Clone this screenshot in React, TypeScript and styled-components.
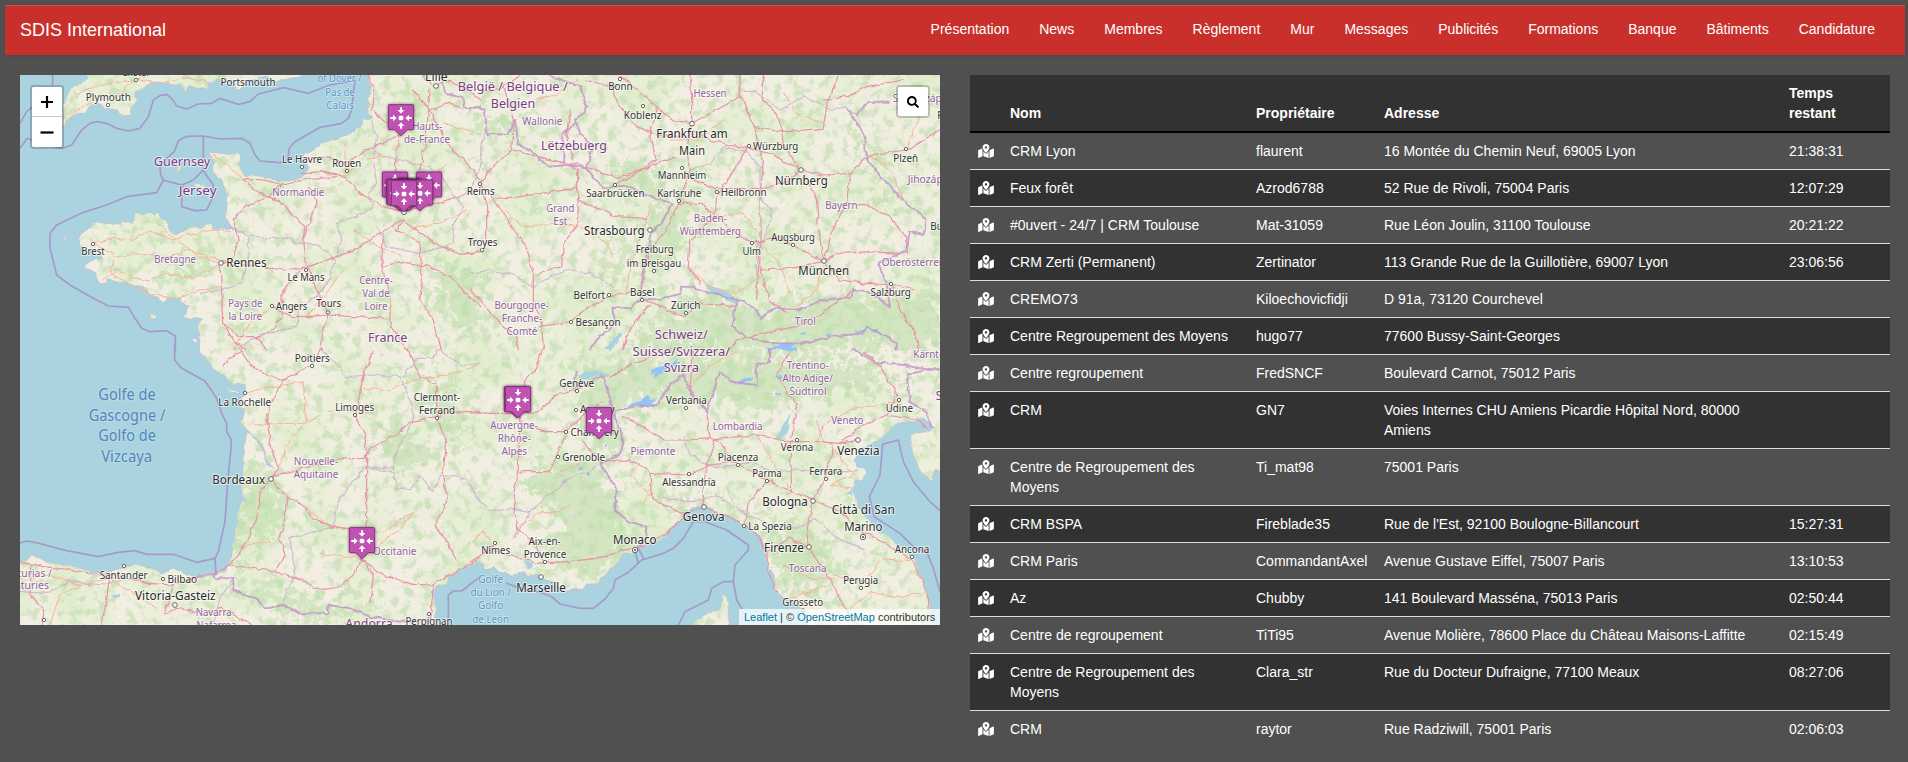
import React from 'react';
import styled, { createGlobalStyle } from 'styled-components';
import { FaMapMarkedAlt, FaSearch } from 'react-icons/fa';

const GlobalStyle = createGlobalStyle`
  *, *::before, *::after { box-sizing: border-box; }
  html, body { margin: 0; background: #505050; }
  body {
    font-family: "Liberation Sans", Arial, sans-serif;
    font-size: 14px;
    line-height: 20px;
    color: #fff;
  }
  a { text-decoration: none; }
`;

const Page = styled.div`
  height: 762px;
  padding: 5px 3px 0 5px;
  overflow: hidden;
`;

const Navbar = styled.nav`
  display: flex;
  align-items: center;
  justify-content: space-between;
  height: 50px;
  padding: 0 15px 3px;
  background: #c9302c;
  border-top: 1px solid #d44c48;
  box-shadow: 0 1px 5px rgba(0, 0, 0, 0.08);
`;

const Brand = styled.a`
  margin-top: 2px;
  color: #fff;
  font-size: 18px;
  line-height: 20px;
`;

const NavList = styled.ul`
  display: flex;
  margin: 0;
  padding: 0;
  list-style: none;
`;

const NavLink = styled.a`
  display: block;
  padding: 0 15px;
  line-height: 20px;
  color: #fff;
`;

const Content = styled.main`
  display: flex;
  gap: 30px;
  align-items: flex-start;
  padding: 20px 15px 0;
`;

const MapPanel = styled.section`
  position: relative;
  flex: none;
  width: 920px;
  height: 550px;
  overflow: hidden;
  background: #aad3df;
`;

const MapCanvas = styled.svg`
  display: block;
  width: 920px;
  height: 550px;
  font-family: "Noto Sans", "Open Sans", sans-serif;
`;

const ControlBox = styled.div<{ $side: 'left' | 'right' }>`
  position: absolute;
  top: 10px;
  ${(p) => p.$side}: 10px;
  border: 2px solid rgba(0, 0, 0, 0.2);
  border-radius: 4px;
  background-clip: padding-box;
  background-color: #fff;
`;

const ControlButton = styled.button`
  display: flex;
  align-items: center;
  justify-content: center;
  width: 30px;
  height: 29px;
  padding: 0;
  border: 0;
  border-radius: 2px;
  background: #fff;
  color: #000;
  & + & {
    height: 31px;
    border-top: 1px solid #ccc;
    border-radius: 0 0 2px 2px;
  }
`;

const Attribution = styled.div`
  position: absolute;
  right: 0;
  bottom: 0;
  height: 16px;
  width: 201px;
  padding: 0 5px;
  background: rgba(255, 255, 255, 0.7);
  color: #333;
  font-size: 11px;
  line-height: 16px;
  white-space: nowrap;
  a { color: #0078a8; }
`;

const Table = styled.table`
  flex: none;
  width: 920px;
  table-layout: fixed;
  border-collapse: collapse;
  border-spacing: 0;
`;

const HeadCell = styled.th`
  padding: 8px;
  border-bottom: 2px solid #000;
  background: #323232;
  text-align: left;
  vertical-align: bottom;
  font-weight: 700;
`;

const Row = styled.tr<{ $dark: boolean }>`
  background: ${(p) => (p.$dark ? '#323232' : 'transparent')};
`;

const Cell = styled.td`
  padding: 8px;
  vertical-align: top;
  tr:not(:first-child) > & { border-top: 1px solid #ddd; }
`;

const PinIcon = styled(FaMapMarkedAlt)`
  display: block;
  width: 16px;
  height: 14px;
  margin-top: 3px;
`;

const NAV = ['Présentation', 'News', 'Membres', 'Règlement', 'Mur', 'Messages', 'Publicités', 'Formations', 'Banque', 'Bâtiments', 'Candidature'];

const ROWS: [string, string, string, string][] = [
  ['CRM Lyon', 'flaurent', '16 Montée du Chemin Neuf, 69005 Lyon', '21:38:31'],
  ['Feux forêt', 'Azrod6788', '52 Rue de Rivoli, 75004 Paris', '12:07:29'],
  ['#0uvert - 24/7 | CRM Toulouse', 'Mat-31059', 'Rue Léon Joulin, 31100 Toulouse', '20:21:22'],
  ['CRM Zerti (Permanent)', 'Zertinator', '113 Grande Rue de la Guillotière, 69007 Lyon', '23:06:56'],
  ['CREMO73', 'Kiloechovicfidji', 'D 91a, 73120 Courchevel', ''],
  ['Centre Regroupement des Moyens', 'hugo77', '77600 Bussy-Saint-Georges', ''],
  ['Centre regroupement', 'FredSNCF', 'Boulevard Carnot, 75012 Paris', ''],
  ['CRM', 'GN7', 'Voies Internes CHU Amiens Picardie Hôpital Nord, 80000 Amiens', ''],
  ['Centre de Regroupement des Moyens', 'Ti_mat98', '75001 Paris', ''],
  ['CRM BSPA', 'Fireblade35', "Rue de l'Est, 92100 Boulogne-Billancourt", '15:27:31'],
  ['CRM Paris', 'CommandantAxel', 'Avenue Gustave Eiffel, 75007 Paris', '13:10:53'],
  ['Az', 'Chubby', '141 Boulevard Masséna, 75013 Paris', '02:50:44'],
  ['Centre de regroupement', 'TiTi95', 'Avenue Molière, 78600 Place du Château Maisons-Laffitte', '02:15:49'],
  ['Centre de Regroupement des Moyens', 'Clara_str', 'Rue du Docteur Dufraigne, 77100 Meaux', '08:27:06'],
  ['CRM', 'raytor', 'Rue Radziwill, 75001 Paris', '02:06:03'],
];

/* Map geometry is kept on four sheets; three map units make one pixel. */
type Sheet = 'nw' | 'ne' | 'sw' | 'se';
const ORIGIN: Record<Sheet, [number, number]> = {
  nw: [0, 180],
  ne: [1410, 180],
  sw: [0, 1035],
  se: [1410, 1035],
};

const pts = (sheet: Sheet, s: string) =>
  s.trim().split(/\s+/).map((p) => {
    const [x, y] = p.split(',').map(Number);
    return `${x + ORIGIN[sheet][0]},${y + ORIGIN[sheet][1]}`;
  }).join(' ');

const LAND = [
  [
    pts('nw', '1105,30 1107,62 1111,85 1102,120 1103,160 1118,172 1090,180 1083,200 1050,222 1010,236 965,250 945,265 915,282 917,305 927,325 915,345 897,358 865,363 835,362 808,355 760,345 735,350 722,328 718,308 722,295 712,278 690,285 660,279 625,278 640,302 642,340 665,360 673,380 680,400 678,440 675,475 690,490 700,505 670,506 640,508 635,490 620,492 600,510 585,502 570,505 545,515 525,525 510,510 505,490 480,470 476,455 458,466 445,458 430,465 405,462 400,490 370,485 345,493 335,487 318,492 290,485 275,500 260,510 240,525 238,558 262,575 300,575 308,595 275,605 250,620 285,635 295,655 300,672 320,668 325,655 345,665 380,665 395,680 420,680 450,700 490,728 510,712 540,713 545,728 570,735 548,770 570,778 610,775 595,795 600,830 598,870'),
    pts('sw', '600,15 625,50 645,75 680,95 700,120 735,115 738,145 725,160 722,185 735,200 722,235 745,258 775,285 790,305 795,340 820,370 800,358 787,315 765,280 742,260 735,290 730,360 725,430 728,460 718,490 712,540 704,575 695,635 685,665 665,685 640,690 600,697 560,690 545,680 520,672 505,680 480,685 470,675 430,665 410,658 385,662 360,675 320,682 270,680 240,670 190,660 140,652 95,632 80,645 50,650 50,860 1310,860 1305,780 1298,742 1312,725 1340,715 1350,690 1400,665 1440,650'),
    pts('se', '0,648 40,658 48,675 75,665 90,682 130,690 160,680 175,692 215,690 225,705 255,710 262,722 290,735 320,730 340,735 352,718 385,715 400,690 430,670 460,630 490,620 510,605 560,590 590,570 610,542 630,525 645,502 670,488 705,480 740,500 790,520 830,545 845,560 865,570 885,600 890,655 912,690 918,740 940,760 965,765 985,780 1000,810 1020,860 1390,860 1380,790 1360,710 1345,670 1330,640 1290,600 1230,560 1190,520 1160,480 1150,430 1155,405 1175,408 1190,385 1185,370 1160,365 1155,345 1165,320 1205,295 1240,275 1265,245 1290,235 1335,230 1355,222 1385,240 1380,262 1345,260 1318,275 1330,330 1350,375 1383,410 1395,375 1430,370'),
    pts('ne', '1430,20'),
  ].join(' '),
  pts('nw', '250,30 265,55 235,75 210,90 200,115 188,130 190,205 200,180 225,165 250,160 270,140 300,130 320,145 355,150 372,168 390,165 392,140 412,122 402,98 430,88 452,68 490,65 530,78 545,76 557,98 563,78 600,88 625,82 623,68 650,60 690,60 715,80 735,65 760,60 800,50 825,62 860,55 900,52 935,30'),
  pts('nw', '700,74 718,68 740,78 716,90'),
  pts('se', '660,860 680,825 720,800 752,795 758,750 770,755 775,790 775,860'),
  pts('nw', '526,328 545,320 545,330 535,335'),
  pts('nw', '582,374 612,374 615,384 585,384'),
  pts('nw', '190,535 200,533 202,540 194,541'),
  pts('nw', '446,760 470,762 468,775 455,772'),
  pts('nw', '576,830 590,838 592,850 580,845'),
  pts('sw', '565,33 578,38 570,41'),
  pts('sw', '680,128 720,142 712,148 685,138'),
];

const FORESTS = [
  pts('sw', '745,300 800,370 850,440 865,500 800,560 710,640 725,500'),
  pts('ne', '550,470 605,400 650,430 650,520 600,600 540,630 530,570'),
  pts('ne', '430,560 480,580 470,640 430,660 370,650'),
  pts('ne', '400,300 560,320 590,420 480,400'),
  pts('ne', '20,170 140,190 150,260 110,240 50,230'),
  pts('ne', '1130,150 1190,260 1260,370 1370,480 1300,440 1200,330 1160,270'),
  pts('ne', '640,690 880,750 1140,690 1240,720 1410,690 1410,870 440,870 560,800'),
  pts('se', '310,90 420,50 660,30 900,40 1180,60 1330,120 1180,130 1040,150 900,180 740,170 560,160 430,200 460,320 400,350 340,200'),
  pts('se', '180,360 380,340 420,430 470,530 520,580 400,690 230,650 270,500 180,440'),
  pts('sw', '700,690 860,740 980,780 1080,800 1180,820 850,810'),
  pts('sw', '1120,220 1240,250 1290,370 1180,370'),
  pts('sw', '1240,40 1360,140 1400,320 1300,210'),
  pts('se', '560,470 640,500 690,460 780,470 860,530 950,570 1010,540 1090,620 1050,740 930,720 900,600 830,520 700,450'),
  pts('nw', '1280,610 1440,640 1440,820 1350,790'),
  pts('nw', '460,630 590,600 650,620 560,660'),
];

const WATER = [
  pts('ne', '705,672 760,690 805,718 800,735 760,715 725,700'),
  pts('se', '320,90 370,75 415,85 418,97 380,92 345,105'),
  pts('se', '962,205 955,250 935,285 920,280 935,245'),
  pts('ne', '400,865 450,820 458,825 425,870'),
  pts('se', '1130,445 1150,432 1148,455'),
  pts('se', '165,650 190,655 185,675 170,670'),
  pts('sw', '725,460 740,462 735,475 727,470'),
  pts('sw', '330,750 360,743 355,753 335,758'),
];

const LAKES = [
  pts('se', '545,70 590,60 620,42 630,50 600,72 575,82 555,100 550,85 540,95'),
  pts('se', '475,180 510,172 530,150 540,165 563,158 545,172 558,188 530,180 515,190 495,180 470,188'),
  pts('ne', '880,865 960,850 975,855 960,865 940,870'),
  pts('se', '935,5 985,10 980,22 950,15'),
  pts('se', '803,105 835,93 850,100 830,110 810,118'),
  pts('se', '330,365 340,365 340,375 330,375'),
  pts('se', '347,378 357,380 355,392 347,390'),
  pts('se', '400,300 412,290 410,305'),
  pts('se', '925,85 940,95 928,102'),
  pts('ne', '1150,812 1195,805 1190,815 1155,818'),
  pts('ne', '1205,812 1222,805 1218,818'),
  pts('ne', '1065,825 1075,820 1080,830'),
  pts('ne', '990,820 1003,815 1000,828'),
  pts('se', '915,145 930,140 928,152'),
];

const MOTORWAYS = [
  pts('nw', '1105,45 1120,90 1115,150 1160,190 1200,210 1190,280 1185,330'),
  pts('nw', '1270,45 1300,80 1340,60 1400,90 1440,120'),
  pts('nw', '1240,90 1290,150 1350,130 1390,150'),
  pts('nw', '1290,90 1285,160 1275,260 1255,350 1225,440'),
  pts('nw', '1290,150 1320,210 1350,260 1410,320 1440,360'),
  pts('nw', '1195,225 1150,250 1095,270 1040,310 980,290 925,300'),
  pts('nw', '905,340 960,335 1035,350 1080,400 1150,440 1210,455'),
  pts('nw', '725,355 790,360 850,375 910,360 1010,350'),
  pts('nw', '725,355 780,400 850,430 880,470 915,500 908,540'),
  pts('nw', '1205,480 1140,520 1080,560 1010,590 925,620 850,630 720,610 660,610'),
  pts('nw', '925,380 950,420 935,470 908,540 915,600 950,690 985,760'),
  pts('nw', '850,370 800,410 740,440 700,480 715,540 700,590 665,610'),
  pts('nw', '1205,480 1260,520 1310,555 1380,580 1440,575'),
  pts('nw', '1150,520 1145,620 1170,710 1170,790 1220,870'),
  pts('nw', '1210,480 1190,510 1260,550 1265,640 1260,720 1300,780 1325,870'),
  pts('nw', '1145,620 1200,605 1290,620 1350,650 1400,700 1440,740'),
  pts('nw', '1220,450 1280,440 1340,420 1440,390'),
  pts('nw', '660,610 665,700 668,790 720,830 770,830 820,810 850,760 845,700 900,630'),
  pts('nw', '820,740 870,770 920,770 985,765 1060,770 1160,775'),
  pts('nw', '770,830 800,870'),
  pts('nw', '668,790 700,840 740,870'),
  pts('nw', '985,765 965,820 960,870'),
  pts('sw', '720,10 750,60 800,90 850,105 935,60 965,10'),
  pts('sw', '850,105 825,150 800,210 810,290 835,370 812,400'),
  pts('sw', '670,60 690,40 730,20'),
  pts('sw', '812,400 780,440 775,500 750,570 720,620 690,660 650,685 600,690 520,720 495,800'),
  pts('sw', '812,400 860,455 910,480 940,520 1010,550 1050,555'),
  pts('sw', '860,455 855,520 840,580 855,630 830,680 690,660'),
  pts('sw', '830,680 900,705 960,730 1020,725 1060,690 1085,640'),
  pts('sw', '1085,640 1130,680 1180,700 1240,718 1300,720 1350,690 1440,640'),
  pts('sw', '1120,20 1090,90 1075,170 1065,215 1095,270 1100,340 1100,420 1100,530 1085,600 1085,640'),
  pts('sw', '812,395 870,380 950,360 1010,342 1095,340 1110,310 1190,270 1230,230 1310,215'),
  pts('sw', '1220,10 1260,95 1310,120 1310,215 1340,290 1330,380 1340,470 1305,540 1340,590 1365,640'),
  pts('sw', '1310,215 1370,200 1440,205'),
  pts('sw', '1300,720 1295,780 1290,840'),
  pts('sw', '60,650 130,665 220,675 300,690 360,690 440,715 520,720 600,695'),
  pts('sw', '95,660 90,750 130,790 130,840'),
  pts('sw', '330,690 320,760 305,840'),
  pts('sw', '1085,640 1120,690 1110,770'),
  pts('sw', '490,810 530,790 620,800 665,790 720,820 760,840'),
  pts('ne', '0,85 60,95 100,80 150,45'),
  pts('ne', '100,75 130,180 125,270 70,320 30,370 50,440 50,540 40,570'),
  pts('ne', '130,270 200,290 290,310 320,330 325,420 440,470 530,475'),
  pts('ne', '70,415 150,410 250,395 320,385'),
  pts('ne', '30,370 80,430 125,500 170,560 190,640 190,720 215,790 220,870'),
  pts('ne', '0,690 40,730 90,790 140,830 145,870'),
  pts('ne', '320,330 325,450 320,500 280,550 275,620 195,645'),
  pts('ne', '290,310 330,315 390,335 440,355 470,345 540,320 620,290'),
  pts('ne', '300,150 290,220 310,300'),
  pts('ne', '350,60 420,80 450,140 500,200 560,225 640,230'),
  pts('ne', '450,45 490,80 560,140 610,180 665,190'),
  pts('ne', '560,140 540,230 560,300 500,340 430,375'),
  pts('ne', '660,45 665,110 665,190 650,270 660,330 625,430 590,510 545,560 520,650 515,715'),
  pts('ne', '665,190 740,150 810,110 810,45'),
  pts('ne', '665,210 720,240 800,260 835,265 900,280 990,330'),
  pts('ne', '835,260 780,350 740,410 735,470 660,540 655,620 690,670'),
  pts('ne', '625,430 690,430 740,470 800,520 850,550 880,545'),
  pts('ne', '810,100 850,200 880,300 870,420 870,540 865,630 860,720'),
  pts('ne', '850,200 950,215 1060,205 1070,140 1095,70 1100,45'),
  pts('ne', '990,330 940,250 930,180 880,120 880,45'),
  pts('ne', '990,330 1060,345 1140,340 1200,285 1310,270 1410,210'),
  pts('ne', '1000,340 1040,420 1045,500 1060,600'),
  pts('ne', '1140,340 1130,430 1080,520 1065,600'),
  pts('ne', '1130,430 1200,440 1260,470 1310,530 1310,580'),
  pts('ne', '860,545 920,530 980,560 1060,605'),
  pts('ne', '870,630 960,625 1060,605 1110,580 1200,575 1290,580'),
  pts('ne', '1060,605 1110,660 1190,670 1265,675 1340,690'),
  pts('ne', '640,345 730,385 870,385 940,370 1000,330'),
  pts('ne', '515,715 560,735 640,770 690,730 800,740'),
  pts('ne', '540,735 500,780 470,830 460,870'),
  pts('ne', '210,800 300,785 360,740 420,710 510,690'),
  pts('ne', '1140,695 1060,760 980,800 880,820 800,840 780,870'),
  pts('ne', '1265,675 1290,750 1340,830 1345,870'),
  pts('ne', '870,620 900,720 950,760'),
  pts('ne', '1060,120 1130,110 1190,80 1300,60'),
  pts('se', '220,5 200,70 165,110 145,190 150,230 145,370 130,450 140,550 200,600 220,650'),
  pts('se', '0,200 60,205 130,205 205,200 260,150 320,135'),
  pts('se', '150,230 220,260 290,260 350,200 400,170'),
  pts('se', '290,260 260,330 240,380 150,380'),
  pts('se', '340,290 390,350 450,345 500,350 540,385 655,390'),
  pts('se', '460,215 510,240 580,285 650,285 740,280 860,270 960,290 1040,290 1110,295 1165,285'),
  pts('se', '735,280 700,400 700,485'),
  pts('se', '735,280 800,355 890,405 965,440 1030,465'),
  pts('se', '660,390 720,360 800,350'),
  pts('se', '540,385 545,460 600,490 660,515'),
  pts('se', '960,290 965,440 950,450'),
  pts('se', '1030,465 1065,400 1090,310'),
  pts('se', '1030,465 1110,500 1180,560 1270,610 1330,650 1370,740 1375,800'),
  pts('se', '1030,465 1010,560 1015,605 1050,660 1090,720 1130,800 1160,840'),
  pts('se', '1015,605 960,580 890,620 895,680 920,740'),
  pts('se', '890,405 830,480 825,540 860,570 890,620'),
  pts('se', '700,485 780,515 825,545'),
  pts('se', '700,485 640,510 600,560 500,610'),
  pts('se', '0,650 60,615 120,630 200,655 290,650 380,640 480,610'),
  pts('se', '75,595 20,640'),
  pts('se', '1110,295 1180,240 1250,210 1340,225 1375,250'),
  pts('se', '1250,210 1280,150 1230,60 1180,20'),
  pts('se', '420,100 480,60 600,10'),
  pts('se', '720,280 710,200 660,130 670,20'),
  pts('se', '965,280 980,180 920,90 960,20'),
];

const ROADS = [
  pts('nw', '190,200 230,150 290,120 360,100 405,60 450,45'),
  pts('nw', '190,150 250,90 330,70 410,58 480,70 560,50 620,65'),
  pts('nw', '280,550 340,535 400,540 450,510 520,540 560,525 640,510 700,515'),
  pts('nw', '280,550 350,590 430,580 500,590 570,570 660,600'),
  pts('nw', '310,660 350,630 400,650 450,660 500,640 580,655 655,615'),
  pts('nw', '340,600 330,640 420,690 520,720 600,690 660,680'),
  pts('nw', '470,490 530,540 600,590 655,605'),
  pts('nw', '640,285 690,320 720,350'),
  pts('nw', '1035,250 1035,350 1080,300 1160,290'),
  pts('nw', '1060,510 1140,560 1200,590'),
  pts('nw', '1340,310 1290,370 1240,440'),
  pts('nw', '1420,215 1330,190'),
  pts('nw', '1230,510 1340,480 1400,450'),
  pts('nw', '920,770 980,700 1020,640'),
  pts('nw', '700,870 750,790 820,740'),
  pts('sw', '735,145 790,130 820,125 910,110 920,230'),
  pts('sw', '760,240 850,235 920,235 960,210'),
  pts('sw', '985,200 1060,195 1120,205'),
  pts('sw', '1085,130 1170,135 1240,105 1260,100'),
  pts('sw', '835,370 860,300 910,240'),
  pts('sw', '725,610 780,590 820,595'),
  pts('sw', '920,490 990,545 1060,555 1150,560 1240,500'),
  pts('sw', '1130,605 1200,550 1240,500'),
  pts('sw', '1260,100 1340,90 1440,60'),
  pts('sw', '60,700 150,690 230,720 330,700 470,790'),
  pts('sw', '150,840 180,750 240,720'),
  pts('sw', '960,625 1000,630 1080,640'),
  pts('ne', '200,120 270,100 320,60'),
  pts('ne', '80,430 160,500 250,490 330,500'),
  pts('ne', '330,500 400,540 430,580'),
  pts('ne', '600,240 690,240 760,180'),
  pts('ne', '540,430 520,510 480,620 470,690'),
  pts('ne', '720,470 820,460 860,510'),
  pts('ne', '650,620 720,680 800,700 870,650'),
  pts('ne', '940,100 980,160 1060,190'),
  pts('ne', '1200,285 1270,340 1300,420'),
  pts('ne', '1060,620 1040,690 980,740'),
  pts('ne', '1320,80 1350,170 1310,260'),
  pts('ne', '880,560 930,610 960,700'),
  pts('se', '260,385 340,350'),
  pts('se', '140,550 210,500 270,500 300,480'),
  pts('se', '0,600 40,560 60,590'),
  pts('se', '510,350 480,390 540,450 515,480'),
  pts('se', '860,270 900,340 965,440'),
  pts('se', '1090,310 1150,390 1080,420 1150,430'),
  pts('se', '1130,800 1200,740 1280,760 1370,740'),
  pts('se', '1090,690 1180,710 1240,640 1320,650'),
  pts('se', '940,660 1020,700 1090,700'),
  pts('se', '1000,800 960,760 1020,740 1080,720'),
  pts('se', '660,130 720,60 800,20'),
  pts('se', '1040,290 1060,240 1150,190 1290,170'),
];

const REGIONS = [
  pts('nw', '690,500 740,525 810,535 870,535 890,550 940,550 980,575 1005,600 990,650 960,700 900,740 890,800 770,830 700,870'),
  pts('nw', '600,700 660,690 720,670 745,600 745,530'),
  pts('nw', '1115,180 1130,230 1120,300 1130,370 1105,400 1120,440 1070,470 1010,490 1025,540 1005,600'),
  pts('nw', '1120,280 1200,300 1290,320 1330,360 1390,440 1355,500 1365,550 1260,580 1160,560 1130,500'),
  pts('sw', '960,10 1000,50 1040,95 1110,90 1200,95 1220,140 1240,200 1230,250 1190,310 1180,370 1100,365 1050,420 1010,480 1000,545 870,580 885,690 860,740 850,770'),
  pts('sw', '1110,370 1180,380 1190,435 1230,430 1260,390 1300,440 1320,390 1400,400 1440,470'),
  pts('sw', '1210,95 1250,40 1300,40 1310,10 1380,60 1440,60'),
  pts('ne', '0,640 60,630 130,645 190,680 240,650 300,630 360,640 430,680'),
  pts('ne', '40,220 30,330 0,390'),
  pts('se', '0,430 60,500 130,490 180,500 150,550 130,580'),
  pts('se', '180,500 250,440 300,400 350,380 400,350'),
  pts('ne', '760,260 830,275 870,320 870,410 905,450 890,520 860,560 860,700'),
  pts('ne', '820,90 870,100 930,150 1000,110 1090,150 1130,140'),
  pts('ne', '660,330 720,310 760,260'),
  pts('se', '640,270 660,330 740,370 850,350 900,380 980,375 1090,380 1160,380'),
  pts('se', '580,460 670,470 740,450 830,510 900,540 980,550 1040,520 1100,580 1180,610'),
  pts('se', '1040,230 1060,290 1090,300'),
  pts('sw', '700,700 660,760 640,840'),
  pts('sw', '60,740 140,745 210,710 310,720 380,700 480,720'),
];

const BORDERS = [
  pts('nw', '1320,45 1340,100 1390,110 1395,145 1440,140'),
  pts('ne', '0,140 45,150 50,220 110,225 135,180 145,250 190,280 235,320 290,315 350,325 400,385 470,380 540,410 605,430 580,480 545,520 530,590 515,650 515,715'),
  pts('ne', '240,45 330,80 350,140 315,190 280,220 280,310'),
  pts('ne', '315,180 330,220 370,260 350,325'),
  pts('ne', '515,715 480,745 430,740 435,790 380,840 360,870'),
  pts('ne', '515,715 570,720 630,700 635,680 670,680 720,700 810,720 850,740 875,775 910,745 980,750 1060,720 1140,710 1150,690 1210,700 1260,740 1250,670 1225,610 1310,570 1320,515 1360,525 1370,480 1310,430 1240,360 1200,310 1180,265 1190,235 1135,150 1160,165 1200,125 1260,125'),
  pts('ne', '800,725 785,800 830,830 910,850'),
  pts('se', '320,80 310,130 350,120 400,90 430,200 490,185 560,180 600,120 640,90 660,140 710,200 750,80 780,110 860,120 860,60 900,50 900,10'),
  pts('ne', '910,850 1000,850 1080,830 1180,820 1190,800 1280,850 1280,870'),
  pts('se', '1150,10 1210,50 1300,60 1380,75 1410,70'),
  pts('se', '430,200 460,290 450,330 390,355 420,400 440,440 435,500 480,530 530,545 525,580 500,615'),
  pts('sw', '640,690 650,700 700,700 700,735 770,760 800,790 850,780 900,805 980,805 985,780 1050,790 1110,815 1200,830 1300,825'),
  pts('se', '1385,70 1310,90 1320,170 1370,200 1385,250'),
];

const SEA_LINES = [
  pts('nw', '158,40 158,75'),
  pts('nw', '60,190 80,155 98,140'),
  pts('nw', '60,265 82,235 110,245 150,258 190,265 215,255 245,210 270,190 290,185 320,190 350,205 385,213 420,205 445,170 460,120 480,107 500,103 515,115 530,138 560,147 595,132 635,130 660,115 715,133 750,125 775,102 850,83 925,100 990,75 1065,62'),
  pts('nw', '1065,62 1055,150 1045,175 1025,190 960,202 920,225 885,245 868,265 862,308 830,307 780,303 765,285 750,250 725,235 660,237 610,228 560,229 535,242 523,275 500,295 480,320 482,345 490,360 470,398 380,410 320,435 250,457 170,495 150,520 150,565 170,645 210,675 280,715 325,738 385,742 405,775 425,805 450,815 500,812 526,828 526,870'),
  pts('nw', '610,230 610,330 580,360 545,375 545,440 585,452 620,450 640,408 640,375 608,330'),
  pts('nw', '490,360 550,377'),
  pts('sw', '524,0 524,45 545,70 615,108 650,160 665,205 680,235 680,260 694,285 692,320 685,390 680,455 675,530 655,620 645,640 590,652 520,628 440,628 405,617 355,622 295,635 200,617 105,592 80,588 60,594'),
  pts('sw', '645,640 648,688'),
  pts('sw', '1345,840 1345,750 1360,738 1385,738 1440,695'),
  pts('se', '110,715 150,730 205,740 245,755 270,777 330,790 370,790 405,762 430,730 435,705 475,682 515,645 580,625 610,610 640,580 670,530 705,530 770,555 835,600 835,615 795,660 790,710 760,710 725,730 715,765 645,800 625,840'),
  pts('se', '790,710 800,765 815,790'),
  pts('se', '497,625 505,655'),
  pts('se', '505,610 522,643'),
  pts('se', '1410,497 1380,470 1330,410 1300,350 1285,285 1238,298 1230,390 1198,455 1212,515 1290,565 1335,610 1370,620 1390,670 1410,740'),
];

type Kind = 'town' | 'city' | 'region' | 'country' | 'sea' | 'gulf';
const KIND: Record<Kind, { size: number; fill: string; halo: string }> = {
  town: { size: 33, fill: '#333', halo: 'rgba(255,255,255,.65)' },
  city: { size: 38, fill: '#2a2a2a', halo: 'rgba(255,255,255,.65)' },
  region: { size: 32, fill: '#92619a', halo: 'rgba(255,255,255,.65)' },
  country: { size: 38, fill: '#7c3c82', halo: 'rgba(255,255,255,.65)' },
  sea: { size: 32, fill: '#6196c9', halo: 'rgba(255,255,255,.35)' },
  gulf: { size: 47, fill: '#4f86bd', halo: 'rgba(255,255,255,.2)' },
};

/* kind, sheet, text, centre x, baseline y, width */
const LABELS: [Kind, Sheet, string, number, number, number][] = [
  ['town', 'nw', 'Exeter', 409, 48, 82], ['town', 'nw', 'Plymouth', 325, 123, 135], ['town', 'nw', 'Portsmouth', 744, 78, 165],
  ['sea', 'nw', 'of Dover /', 1019, 67, 133], ['sea', 'nw', 'Pas de', 1020, 107, 88], ['sea', 'nw', 'Calais', 1020, 146, 82],
  ['city', 'nw', 'Lille', 1309, 63, 68],
  ['region', 'nw', 'Hauts-', 1282, 210, 90], ['region', 'nw', 'de-France', 1281, 250, 138],
  ['country', 'nw', 'Guernsey', 546, 318, 170], ['country', 'nw', 'Jersey', 593, 404, 114],
  ['town', 'nw', 'Le Havre', 906, 309, 120], ['town', 'nw', 'Rouen', 1040, 320, 87], ['region', 'nw', 'Normandie', 895, 408, 156],
  ['town', 'nw', 'Brest', 279, 584, 70], ['region', 'nw', 'Bretagne', 525, 608, 125], ['city', 'nw', 'Rennes', 739, 621, 121],
  ['town', 'nw', 'Le Mans', 918, 662, 111], ['region', 'nw', 'Pays de', 736, 740, 103], ['region', 'nw', 'la Loire', 736, 779, 101],
  ['town', 'nw', 'Angers', 875, 749, 94], ['town', 'nw', 'Tours', 986, 742, 75],
  ['region', 'nw', 'Centre-', 1128, 671, 101], ['region', 'nw', 'Val de', 1128, 711, 82], ['region', 'nw', 'Loire', 1128, 751, 69],
  ['country', 'nw', 'France', 1163, 845, 118],
  ['country', 'ne', 'België / Belgique /', 128, 93, 330], ['country', 'ne', 'Belgien', 129, 143, 133], ['region', 'ne', 'Wallonie', 217, 194, 120],
  ['country', 'ne', 'Lëtzebuerg', 312, 269, 198], ['town', 'ne', 'Bonn', 451, 90, 73], ['town', 'ne', 'Koblenz', 518, 176, 113],
  ['region', 'ne', 'Hessen', 720, 110, 99], ['city', 'ne', 'Frankfurt am', 666, 234, 214], ['city', 'ne', 'Main', 666, 286, 78],
  ['town', 'ne', 'Würzburg', 917, 271, 136], ['town', 'ne', 'Mannheim', 636, 357, 146], ['city', 'ne', 'Nürnberg', 994, 375, 158],
  ['town', 'ne', 'Saarbrücken', 436, 412, 175], ['town', 'ne', 'Karlsruhe', 628, 411, 132], ['town', 'ne', 'Heilbronn', 821, 407, 138],
  ['region', 'ne', 'Grand', 271, 456, 84], ['region', 'ne', 'Est', 271, 495, 42], ['town', 'ne', 'Reims', 32, 406, 84], ['town', 'ne', 'Troyes', 38, 558, 89],
  ['city', 'ne', 'Strasbourg', 433, 526, 182], ['region', 'ne', 'Baden-', 721, 485, 99], ['region', 'ne', 'Württemberg', 721, 524, 184],
  ['region', 'ne', 'Bayern', 1114, 448, 97], ['town', 'ne', 'Augsburg', 969, 544, 131], ['town', 'ne', 'Ulm', 845, 586, 55],
  ['town', 'ne', 'Freiburg', 554, 580, 114], ['town', 'ne', 'im Breisgau', 552, 620, 163], ['city', 'ne', 'München', 1061, 645, 152],
  ['town', 'ne', 'Plzeň', 1307, 305, 74], ['region', 'ne', 'Severozápad', 1360, 126, 184], ['region', 'ne', 'Jihozápad', 1384, 368, 142], ['town', 'ne', 'Praha', 1444, 176, 84],
  ['town', 'ne', 'Budějovice', 1457, 510, 152], ['region', 'ne', 'Oberösterreich', 1341, 618, 212], ['town', 'ne', 'Salzburg', 1262, 708, 121],
  ['town', 'ne', 'Belfort', 358, 717, 95], ['town', 'ne', 'Basel', 517, 708, 74], ['town', 'ne', 'Zürich', 647, 746, 88],
  ['town', 'ne', 'Besançon', 384, 797, 135], ['region', 'ne', 'Bourgogne-', 155, 747, 163], ['region', 'ne', 'Franche-', 156, 787, 121], ['region', 'ne', 'Comté', 156, 826, 93],
  ['region', 'ne', 'Tirol', 1006, 794, 63], ['country', 'ne', 'Schweiz/', 634, 837, 159],
  ['country', 'se', 'Suisse/Svizzera/', 634, 32, 293], ['country', 'se', 'Svizra', 634, 81, 106],
  ['town', 'se', 'Genève', 320, 125, 104], ['town', 'se', 'Annecy', 382, 205, 104], ['town', 'se', 'Chambéry', 374, 274, 145], ['town', 'se', 'Grenoble', 341, 347, 128],
  ['region', 'se', 'Auvergne-', 132, 251, 142], ['region', 'se', 'Rhône-', 133, 290, 99], ['region', 'se', 'Alpes', 133, 330, 77],
  ['town', 'se', 'Verbania', 649, 177, 122], ['region', 'se', 'Trentino-', 1013, 72, 126], ['region', 'se', 'Alto Adige/', 1013, 111, 151], ['region', 'se', 'Südtirol', 1014, 151, 111],
  ['region', 'se', 'Kärnten', 1386, 38, 112], ['country', 'se', 'Slovenija', 1468, 165, 142], ['town', 'se', 'Udine', 1288, 200, 82], ['region', 'se', 'Veneto', 1132, 237, 97],
  ['region', 'se', 'Lombardia', 803, 254, 150], ['region', 'se', 'Piemonte', 549, 329, 135], ['town', 'se', 'Verona', 981, 319, 97], ['city', 'se', 'Venezia', 1165, 330, 127],
  ['town', 'se', 'Piacenza', 804, 349, 122], ['town', 'se', 'Parma', 891, 397, 88], ['town', 'se', 'Ferrara', 1067, 391, 99], ['town', 'se', 'Alessandria', 657, 424, 161],
  ['city', 'se', 'Bologna', 945, 483, 137], ['city', 'se', 'Genova', 701, 528, 125], ['city', 'se', 'Città di San', 1180, 506, 189], ['city', 'se', 'Marino', 1180, 557, 115],
  ['town', 'se', 'La Spezia', 900, 554, 131], ['city', 'se', 'Firenze', 942, 620, 120], ['town', 'se', 'Ancona', 1326, 623, 104], ['region', 'se', 'Toscana', 1013, 682, 113],
  ['town', 'se', 'Perugia', 1172, 718, 105], ['town', 'se', 'Grosseto', 998, 783, 122], ['city', 'se', 'Monaco', 494, 596, 130],
  ['town', 'se', 'Nîmes', 77, 628, 87], ['town', 'se', 'Aix-en-', 224, 600, 97], ['town', 'se', 'Provence', 225, 640, 128], ['city', 'se', 'Marseille', 213, 741, 149],
  ['sea', 'se', 'Golfe', 62, 714, 74], ['sea', 'se', 'du Lion /', 62, 754, 121], ['sea', 'se', 'Golfo', 62, 793, 76], ['sea', 'se', 'de León', 62, 833, 110],
  ['gulf', 'sw', 'Golfe de', 381, 165, 172], ['gulf', 'sw', 'Gascogne /', 381, 227, 230], ['gulf', 'sw', 'Golfo de', 381, 288, 173], ['gulf', 'sw', 'Vizcaya', 380, 350, 153],
  ['town', 'sw', 'Poitiers', 937, 50, 105], ['town', 'sw', 'La Rochelle', 734, 182, 159], ['town', 'sw', 'Limoges', 1064, 197, 117], ['town', 'sw', 'Clermont-', 1311, 168, 139], ['town', 'sw', 'Ferrand', 1311, 208, 108],
  ['region', 'sw', 'Nouvelle-', 948, 360, 133], ['region', 'sw', 'Aquitaine', 948, 400, 134], ['city', 'sw', 'Bordeaux', 716, 417, 159], ['region', 'sw', 'Occitanie', 1184, 629, 130],
  ['region', 'sw', 'Asturias /', 87, 695, 137], ['region', 'sw', 'Asturies', 87, 733, 120], ['town', 'sw', 'Santander', 371, 701, 144], ['town', 'sw', 'Bilbao', 547, 713, 89],
  ['city', 'sw', 'Vitoria-Gasteiz', 526, 764, 242], ['region', 'sw', 'Navarra', 641, 812, 108], ['region', 'sw', 'Nafarroa', 649, 851, 120],
  ['country', 'sw', 'Andorra', 1107, 848, 142], ['town', 'sw', 'Perpignan', 1287, 841, 141], ['town', 'sw', 'Burgos', 352, 866, 90],
];

/* sheet, x, y, radius */
const DOTS: [Sheet, number, number, number][] = [
  ['nw', 408, 60, 6], ['nw', 324, 135, 6], ['nw', 1308, 78, 8], ['nw', 906, 321, 6], ['nw', 1041, 333, 6], ['nw', 279, 552, 6], ['nw', 663, 609, 8], ['nw', 918, 630, 6],
  ['nw', 816, 738, 6], ['nw', 984, 757, 6], ['nw', 1212, 457, 8], ['ne', 450, 57, 6], ['ne', 519, 138, 6], ['ne', 666, 191, 8], ['ne', 837, 258, 6], ['ne', 636, 324, 6],
  ['ne', 993, 330, 8], ['ne', 435, 375, 6], ['ne', 627, 423, 6], ['ne', 741, 396, 6], ['ne', 30, 372, 6], ['ne', 36, 570, 6], ['ne', 540, 510, 8], ['ne', 969, 555, 6],
  ['ne', 846, 549, 6], ['ne', 552, 633, 6], ['ne', 1062, 603, 8], ['ne', 1308, 267, 6], ['ne', 1263, 672, 6], ['ne', 417, 705, 6], ['ne', 516, 720, 6], ['ne', 648, 759, 6],
  ['ne', 303, 786, 6], ['se', 321, 138, 6], ['se', 318, 195, 6], ['se', 288, 261, 6], ['se', 264, 336, 6], ['se', 648, 189, 6], ['se', 1287, 165, 6], ['se', 981, 285, 6],
  ['se', 1164, 285, 8], ['se', 804, 360, 6], ['se', 891, 408, 6], ['se', 1068, 402, 6], ['se', 657, 387, 6], ['se', 1029, 468, 8], ['se', 702, 486, 8], ['se', 1179, 576, 9],
  ['se', 822, 543, 6], ['se', 1017, 606, 8], ['se', 1326, 636, 6], ['se', 1173, 729, 6], ['se', 999, 796, 6], ['se', 495, 615, 9], ['se', 75, 594, 6], ['se', 225, 651, 6],
  ['se', 213, 696, 8], ['sw', 936, 63, 6], ['sw', 735, 144, 6], ['sw', 1065, 210, 6], ['sw', 1311, 219, 6], ['sw', 813, 402, 8], ['sw', 372, 663, 6], ['sw', 489, 702, 6],
  ['sw', 525, 780, 8], ['sw', 132, 825, 6], ['sw', 1287, 807, 6],
];

const CAPITALS: [Sheet, number, number][] = [['se', 1179, 576], ['se', 495, 615]];

const MARKERS: [Sheet, number, number][] = [
  ['nw', 1203, 132], ['nw', 1185, 334], ['nw', 1287, 334], ['nw', 1222, 357], ['nw', 1224, 357], ['nw', 1226, 357], ['nw', 1260, 358],
  ['nw', 1198, 356], ['nw', 1202, 358], ['nw', 1212, 360],
  ['sw', 1086, 546], ['se', 141, 123], ['se', 144, 123], ['se', 387, 186],
];

const Lines = ({ data, color, width, opacity = 1 }: { data: string[]; color: string; width: number; opacity?: number }) => (
  <g fill="none" stroke={color} strokeWidth={width} strokeLinejoin="round" strokeLinecap="round" opacity={opacity}>
    {data.map((d, i) => <polyline key={i} points={d} />)}
  </g>
);

const Marker = ({ x, y }: { x: number; y: number }) => (
  <g transform={`translate(${x} ${y})`}>
    <path d="M-36 2H36Q38 2 38 5V74Q38 77 35 77H19L0 95L-19 77H-35Q-38 77 -38 74V5Q-38 2 -36 2Z" fill="#c052b2" stroke="#8d2d86" strokeWidth="3" filter="url(#markerShadow)" />
    <rect x="-7" y="35" width="14" height="14" rx="4" fill="#fff" />
    {[0, 90, 180, 270].map((angle) => (
      <path key={angle} transform={`rotate(${angle} 0 42)`} d="M-3 10H3V18H10L0 29L-10 18H-3Z" fill="#fff" />
    ))}
  </g>
);

const FULL = { filterUnits: 'userSpaceOnUse', x: 60, y: 225, width: 2760, height: 1650, colorInterpolationFilters: 'sRGB' } as const;

const FranceMap = () => (
  <MapCanvas viewBox="60 225 2760 1650" role="img" aria-label="Carte">
    <defs>
      <clipPath id="land">{LAND.map((d, i) => <polygon key={i} points={d} />)}</clipPath>
      <filter id="coast" {...FULL}>
        <feTurbulence type="fractalNoise" baseFrequency="0.04" numOctaves="2" seed="3" />
        <feDisplacementMap in="SourceGraphic" scale="15" xChannelSelector="R" yChannelSelector="G" />
      </filter>
      <filter id="woods" {...FULL}>
        <feTurbulence type="fractalNoise" baseFrequency="0.034" numOctaves="5" seed="12" />
        <feColorMatrix values="0 0 0 0 0.74  0 0 0 0 0.86  0 0 0 0 0.67  5 0 0 0 -2.5" />
      </filter>
      <filter id="fields" {...FULL}>
        <feTurbulence type="fractalNoise" baseFrequency="0.006" numOctaves="5" seed="31" />
        <feColorMatrix values="0 0 0 0 0.86  0 0 0 0 0.93  0 0 0 0 0.78  3 0 0 0 -1.2" />
      </filter>
      <filter id="soft" {...FULL}>
        <feTurbulence type="fractalNoise" baseFrequency="0.03" numOctaves="5" seed="8" result="n" />
        <feDisplacementMap in="SourceGraphic" in2="n" scale="190" xChannelSelector="R" yChannelSelector="G" result="d" />
        <feGaussianBlur in="d" stdDeviation="2" />
      </filter>
      <filter id="markerShadow" x="-30%" y="-30%" width="160%" height="160%">
        <feDropShadow dx="0" dy="0" stdDeviation="5" floodColor="#000" floodOpacity="0.5" />
      </filter>
    </defs>
    <rect x="60" y="225" width="2760" height="1650" fill="#aad3df" />
    <g filter="url(#coast)">
      <g fill="#f2efe2" stroke="#c9b3cf" strokeWidth="2">{LAND.map((d, i) => <polygon key={i} points={d} />)}</g>
      <g clipPath="url(#land)">
        <rect x="60" y="225" width="2760" height="1650" filter="url(#fields)" opacity="0.7" />
        <g fill="#c3dfb1" opacity="0.6" filter="url(#soft)">{FORESTS.map((d, i) => <polygon key={i} points={d} />)}</g>
        <rect x="60" y="225" width="2760" height="1650" filter="url(#woods)" opacity="0.6" />
        <g fill="#aad3df">{WATER.map((d, i) => <polygon key={i} points={d} />)}</g>
        <g fill="#93c4f5">{LAKES.map((d, i) => <polygon key={i} points={d} />)}</g>
      </g>
      <Lines data={REGIONS} color="#c9a9cf" width={3.5} opacity={0.75} />
      <Lines data={ROADS} color="#f8b39b" width={3} />
      <Lines data={MOTORWAYS} color="#e992a8" width={3.6} />
      <Lines data={BORDERS} color="#c294c9" width={6} opacity={0.8} />
    </g>
    <Lines data={SEA_LINES} color="#a594c8" width={5} opacity={0.9} />
    <g fill="#fff" stroke="#666" strokeWidth="3">
      {DOTS.map(([s, x, y, r], i) => <circle key={i} cx={x + ORIGIN[s][0]} cy={y + ORIGIN[s][1]} r={r - 1} />)}
    </g>
    {CAPITALS.map(([s, x, y]) => <circle key={x} cx={x + ORIGIN[s][0]} cy={y + ORIGIN[s][1]} r="3" fill="#444" />)}
    <g textAnchor="middle" paintOrder="stroke" strokeLinejoin="round" strokeWidth="6">
      {LABELS.map(([kind, s, text, x, y, w], i) => (
        <text key={i} x={x + ORIGIN[s][0]} y={y + ORIGIN[s][1]} textLength={w} lengthAdjust="spacingAndGlyphs" fontSize={KIND[kind].size} fill={KIND[kind].fill} stroke={KIND[kind].halo}>{text}</text>
      ))}
    </g>
    {MARKERS.map(([s, x, y], i) => <Marker key={i} x={x + ORIGIN[s][0]} y={y + ORIGIN[s][1]} />)}
  </MapCanvas>
);

export default function App() {
  return (
    <>
      <GlobalStyle />
      <Page>
        <Navbar>
          <Brand>SDIS International</Brand>
          <NavList>
            {NAV.map((label) => <li key={label}><NavLink>{label}</NavLink></li>)}
          </NavList>
        </Navbar>
        <Content>
          <MapPanel>
            <FranceMap />
            <ControlBox $side="left">
              <ControlButton aria-label="Zoom in">
                <svg width="14" height="14" viewBox="0 0 14 14"><path d="M1 7H13M7 1V13" stroke="#000" strokeWidth="2.2" /></svg>
              </ControlButton>
              <ControlButton aria-label="Zoom out">
                <svg width="14" height="14" viewBox="0 0 14 14"><path d="M0.5 7.5H13.5" stroke="#000" strokeWidth="2.2" /></svg>
              </ControlButton>
            </ControlBox>
            <ControlBox $side="right">
              <ControlButton aria-label="Rechercher"><FaSearch size={12} /></ControlButton>
            </ControlBox>
            <Attribution><a>Leaflet</a> | © <a>OpenStreetMap</a> contributors</Attribution>
          </MapPanel>
          <Table>
            <colgroup>
              <col width="32" /><col width="246" /><col width="128" /><col width="405" /><col width="109" />
            </colgroup>
            <thead>
              <tr>
                <HeadCell /><HeadCell>Nom</HeadCell><HeadCell>Propriétaire</HeadCell><HeadCell>Adresse</HeadCell><HeadCell>Temps<br />restant</HeadCell>
              </tr>
            </thead>
            <tbody>
              {ROWS.map(([name, owner, address, time], i) => (
                <Row key={i} $dark={i % 2 === 1}>
                  <Cell><PinIcon /></Cell><Cell>{name}</Cell><Cell>{owner}</Cell><Cell>{address}</Cell><Cell>{time}</Cell>
                </Row>
              ))}
            </tbody>
          </Table>
        </Content>
      </Page>
    </>
  );
}
